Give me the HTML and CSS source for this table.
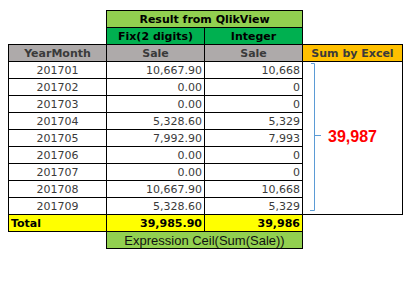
FILE: index.html
```html
<!DOCTYPE html>
<html>
<head>
<meta charset="utf-8">
<link rel="stylesheet" href="styles.css">
</head>
<body>
<table class="sheet">
  <colgroup>
    <col class="c1"><col class="c2"><col class="c3"><col class="c4">
  </colgroup>
  <tr>
    <td class="blank"></td>
    <td class="hd lightgreen" colspan="2">Result from QlikView</td>
    <td class="blank"></td>
  </tr>
  <tr>
    <td class="blank"></td>
    <td class="hd green">Fix(2 digits)</td>
    <td class="hd green">Integer</td>
    <td class="blank"></td>
  </tr>
  <tr>
    <td class="hd gray">YearMonth</td>
    <td class="hd gray">Sale</td>
    <td class="hd gray">Sale</td>
    <td class="hd orange">Sum by Excel</td>
  </tr>
  <tr>
    <td class="ym">201701</td><td class="num">10,667.90</td><td class="num">10,668</td>
    <td class="sumbox" rowspan="9">
      <div class="sumwrap">
        <svg class="brace" width="20" height="152" viewBox="0 0 20 152">
          <path d="M8 1.5 H11.5 V148.5 H7 M11.5 73.5 H18" fill="none" stroke="#5B9BD5" stroke-width="1"/>
        </svg>
        <span class="excel-total">39,987</span>
      </div>
    </td>
  </tr>
  <tr><td class="ym">201702</td><td class="num">0.00</td><td class="num">0</td></tr>
  <tr><td class="ym">201703</td><td class="num">0.00</td><td class="num">0</td></tr>
  <tr><td class="ym">201704</td><td class="num">5,328.60</td><td class="num">5,329</td></tr>
  <tr><td class="ym">201705</td><td class="num">7,992.90</td><td class="num">7,993</td></tr>
  <tr><td class="ym">201706</td><td class="num">0.00</td><td class="num">0</td></tr>
  <tr><td class="ym">201707</td><td class="num">0.00</td><td class="num">0</td></tr>
  <tr><td class="ym">201708</td><td class="num">10,667.90</td><td class="num">10,668</td></tr>
  <tr><td class="ym">201709</td><td class="num">5,328.60</td><td class="num">5,329</td></tr>
  <tr>
    <td class="total label">Total</td>
    <td class="total num">39,985.90</td>
    <td class="total num">39,986</td>
    <td class="blank"></td>
  </tr>
  <tr>
    <td class="blank"></td>
    <td class="expr lightgreen" colspan="2">Expression Ceil(Sum(Sale))</td>
    <td class="blank"></td>
  </tr>
</table>
</body>
</html>
```
FILE: styles.css
```css
html, body {
  margin: 0;
  padding: 0;
  background: #ffffff;
}
body {
  padding: 10px 0 0 8px;
  font-family: "DejaVu Sans", Verdana, sans-serif;
  font-size: 11px;
  color: #3a3a3a;
}
.sheet {
  border-collapse: collapse;
  table-layout: fixed;
  width: 394px;
}
.c1, .c2, .c3 { width: 98px; }
.c4 { width: 100px; }
.sheet td {
  height: 15px;
  padding: 1px 2px 0 2px;
  line-height: 15px;
  border: 1px solid #000;
  white-space: nowrap;
  overflow: visible;
  vertical-align: middle;
}
.sheet td.blank {
  border: none;
}
.hd {
  text-align: center;
  font-weight: bold;
}
.lightgreen { background: #92D050; color: #000; }
.green { background: #00B050; color: #000; }
.gray { background: #AEAAAA; color: #3a3a3a; }
.orange { background: #FFC000; color: #3a3a3a; }
.ym { text-align: center; }
.num { text-align: right; }
.total {
  background: #FFFF00;
  color: #000;
  font-weight: bold;
}
.label { text-align: left; }
.expr {
  text-align: center;
  font-family: "Liberation Sans", Arial, sans-serif;
  font-size: 13px;
  color: #111;
}
.sheet td.sumbox {
  padding: 0;
  vertical-align: top;
}
.sumwrap {
  position: relative;
  height: 152px;
}
.brace {
  position: absolute;
  left: 0;
  top: 0;
}
.excel-total {
  position: absolute;
  left: 25px;
  top: 66px;
  font-family: "Liberation Sans", Arial, sans-serif;
  font-weight: bold;
  font-size: 16px;
  line-height: 18px;
  color: #FF0000;
}
```
